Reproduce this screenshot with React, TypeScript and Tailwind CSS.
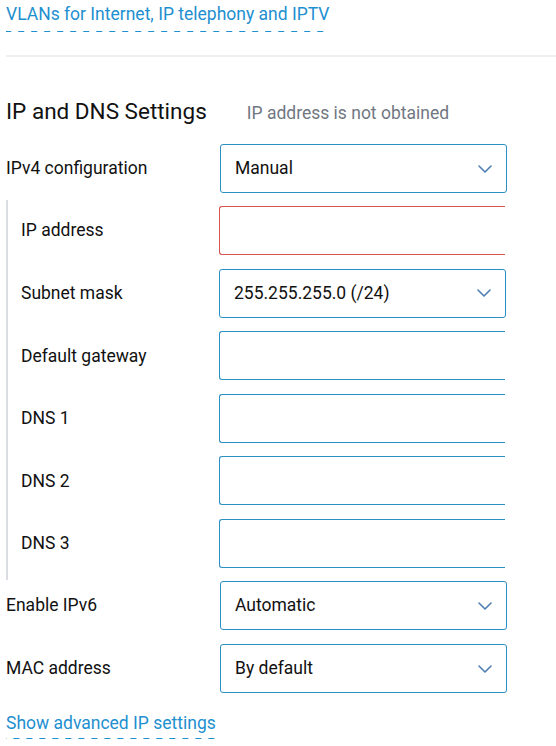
import React from "react";

const Chevron = () => (
  <svg width="14" height="8" viewBox="0 0 14 8" fill="none" className="shrink-0">
    <polyline points="1,1 7,7 13,1" stroke="#4f7fb3" strokeWidth="1.6" fill="none" strokeLinecap="round" strokeLinejoin="round" />
  </svg>
);

const Select = ({ value }: { value: string }) => (
  <div className="w-[287px] h-[49px] border border-[#2b8fc2] rounded-[3px] flex items-center justify-between pl-[14px] pr-[14px] text-[17.5px] text-[#111]">
    <span>{value}</span>
    <Chevron />
  </div>
);

const Input = ({ error }: { error?: boolean }) => (
  <div
    className={
      "w-[286px] h-[49px] border border-r-0 rounded-l-[3px] " +
      (error ? "border-[#d9534f]" : "border-[#2b8fc2]")
    }
  />
);

const dashed =
  "text-[#1e8fcf] pb-[4px] bg-[linear-gradient(to_right,#1e8fcf_6px,transparent_6px)] bg-[length:13px_1px] bg-repeat-x bg-bottom";

export default function App() {
  return (
    <div className="w-[556px] h-[746px] bg-white overflow-hidden font-['Roboto',sans-serif] text-[#111]">
      <div className="pl-[6px]">
        <div className="pt-[1px] h-[33px]">
          <span className={dashed + " text-[17.5px] leading-[27px] inline-block"}>
            VLANs for Internet, IP telephony and IPTV
          </span>
        </div>
        <div className="mt-[22px] h-[2px] bg-[#eceef0]" />
        <div className="mt-[39px] flex items-baseline h-[30px]">
          <h2 className="text-[22.5px] leading-[30px] font-normal">IP and DNS Settings</h2>
          <span className="ml-[40px] text-[17.5px] text-[#717782]">IP address is not obtained</span>
        </div>
        <div className="mt-[18px] flex items-center h-[49px]">
          <div className="w-[214px] text-[17.5px]">IPv4 configuration</div>
          <Select value="Manual" />
        </div>
        <div className="mt-[7px] flex">
          <div className="w-[2px] bg-[#dadde2] h-[380px]" />
          <div className="pl-[13px] pt-[6px] flex flex-col gap-[13.6px]">
            {[
              { l: "IP address", t: "input", e: true },
              { l: "Subnet mask", t: "select", v: "255.255.255.0 (/24)" },
              { l: "Default gateway", t: "input" },
              { l: "DNS 1", t: "input" },
              { l: "DNS 2", t: "input" },
              { l: "DNS 3", t: "input" },
            ].map((r) => (
              <div key={r.l} className="flex items-center h-[49px]">
                <div className="w-[198px] text-[17.5px]">{r.l}</div>
                {r.t === "select" ? <Select value={r.v || ""} /> : <Input error={r.e} />}
              </div>
            ))}
          </div>
        </div>
        <div className="mt-[1px] flex flex-col gap-[14px]">
          <div className="flex items-center h-[49px]">
            <div className="w-[214px] text-[17.5px]">Enable IPv6</div>
            <Select value="Automatic" />
          </div>
          <div className="flex items-center h-[49px]">
            <div className="w-[214px] text-[17.5px]">MAC address</div>
            <Select value="By default" />
          </div>
        </div>
        <div className="mt-[18px]">
          <span className={dashed + " text-[17.5px] leading-[24px] inline-block"}>Show advanced IP settings</span>
        </div>
      </div>
    </div>
  );
}
